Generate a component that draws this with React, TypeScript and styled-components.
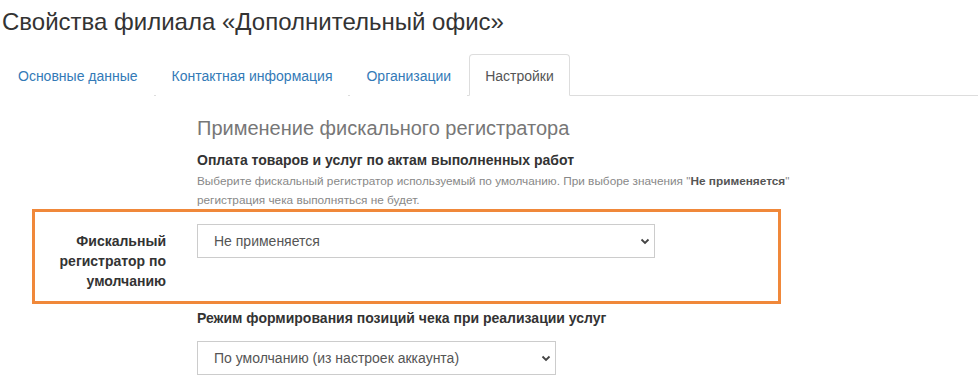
import styled, { createGlobalStyle } from 'styled-components';

const GlobalStyle = createGlobalStyle`
body {
  margin: 0;
  background: #fff;
  font-family: "Liberation Sans", Arial, sans-serif;
  color: #333;
}
`;

const Page = styled.div`
width: 978px;
height: 387px;
overflow: hidden;
`;

const PageTitle = styled.h1`
margin: 0;
padding: 9px 0 0 2px;
font-size: 24px;
font-weight: normal;
line-height: 26px;
color: #333;
`;

const Tabs = styled.ul`
display: flex;
list-style: none;
margin: 19px 0 0 2px;
padding: 0;
border-bottom: 1px solid #ddd;
`;

const Tab = styled.li<{ $active?: boolean }>`
margin: 0 2px -1px 0;
padding: 11px 15px 9px;
font-size: 14px;
line-height: 20px;
border: 1px solid ${p => (p.$active ? '#ddd' : 'transparent')};
border-bottom-color: ${p => (p.$active ? '#fff' : 'transparent')};
border-radius: 4px 4px 0 0;
background: #fff;
color: ${p => (p.$active ? '#555' : '#337ab7')};
`;

const Content = styled.div`
padding-left: 197px;
`;

const SectionTitle = styled.h3`
margin: 19px 0 0 0;
font-size: 20px;
font-weight: normal;
line-height: 26px;
color: #777;
`;

const FieldTitle = styled.div<{ $gap?: number }>`
margin-top: ${p => p.$gap ?? 9}px;
font-size: 14px;
font-weight: bold;
line-height: 20px;
color: #333;
`;

const Help = styled.p`
margin: 2px 0 0 0;
max-width: 610px;
font-size: 11.8px;
line-height: 19px;
color: #888;

b {
  color: #555;
}
`;

const Highlight = styled.div`
display: flex;
align-items: flex-start;
gap: 31px;
margin: -1px 0 0 32px;
width: 743px;
height: 77px;
border: 3px solid #f0883a;
padding-top: 12px;
`;

const Label = styled.label`
width: 131px;
padding-top: 7px;
text-align: right;
font-size: 14px;
font-weight: bold;
line-height: 20px;
color: #333;
`;

const SelectBox = styled.div<{ $width: number }>`
position: relative;
box-sizing: border-box;
width: ${p => p.$width}px;
height: 34px;
border: 1px solid #ccc;
padding: 6px 16px;
font-size: 14px;
line-height: 20px;
color: #555;
background: #fff;
`;

const Chevron = styled.svg`
position: absolute;
right: 4px;
top: 13px;
`;

const SelectRow = styled.div`
margin-top: 13px;
`;

function Select({ value, width }: { value: string; width: number }) {
  return (
    <SelectBox $width={width}>
      {value}
      <Chevron width="10" height="7" viewBox="0 0 10 7">
        <path d="M1.5 1.5 L5 5 L8.5 1.5" fill="none" stroke="#444" strokeWidth="1.8" />
      </Chevron>
    </SelectBox>
  );
}

export default function App() {
  return (
    <Page>
      <GlobalStyle />
      <PageTitle>Свойства филиала «Дополнительный офис»</PageTitle>
      <Tabs>
        <Tab>Основные данные</Tab>
        <Tab>Контактная информация</Tab>
        <Tab>Организации</Tab>
        <Tab $active>Настройки</Tab>
      </Tabs>
      <Content>
        <SectionTitle>Применение фискального регистратора</SectionTitle>
        <FieldTitle>Оплата товаров и услуг по актам выполненных работ</FieldTitle>
        <Help>
          Выберите фискальный регистратор используемый по умолчанию. При выборе значения "<b>Не применяется</b>"
          регистрация чека выполняться не будет.
        </Help>
      </Content>
      <Highlight>
        <Label>Фискальный регистратор по умолчанию</Label>
        <Select value="Не применяется" width={458} />
      </Highlight>
      <Content>
        <FieldTitle $gap={4}>Режим формирования позиций чека при реализации услуг</FieldTitle>
        <SelectRow>
          <Select value="По умолчанию (из настроек аккаунта)" width={359} />
        </SelectRow>
      </Content>
    </Page>
  );
}
